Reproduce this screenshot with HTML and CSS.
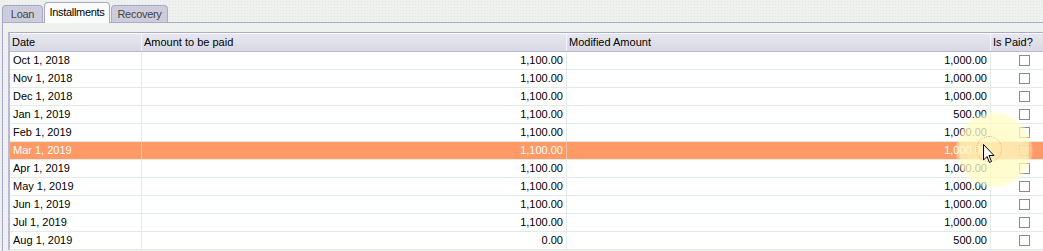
FILE: index.html
```html
<!DOCTYPE html>
<html>
<head>
<meta charset="utf-8">
<link rel="stylesheet" href="styles.css">
</head>
<body>
<div class="window">
  <div class="tabs">
    <div class="tab t-loan">Loan</div>
    <div class="tab active t-inst">Installments</div>
    <div class="tab t-rec">Recovery</div>
  </div>
  <div class="panel">
    <div class="grid">
      <div class="row head">
        <div class="c c1">Date</div>
        <div class="c c2">Amount to be paid</div>
        <div class="c c3">Modified Amount</div>
        <div class="c c4">Is Paid?</div>
      </div>
      <div class="row"><div class="c c1">Oct 1, 2018</div><div class="c c2 num">1,100.00</div><div class="c c3 num">1,000.00</div><div class="c c4"><span class="cb"></span></div></div>
      <div class="row"><div class="c c1">Nov 1, 2018</div><div class="c c2 num">1,100.00</div><div class="c c3 num">1,000.00</div><div class="c c4"><span class="cb"></span></div></div>
      <div class="row"><div class="c c1">Dec 1, 2018</div><div class="c c2 num">1,100.00</div><div class="c c3 num">1,000.00</div><div class="c c4"><span class="cb"></span></div></div>
      <div class="row"><div class="c c1">Jan 1, 2019</div><div class="c c2 num">1,100.00</div><div class="c c3 num">500.00</div><div class="c c4"><span class="cb"></span></div></div>
      <div class="row"><div class="c c1">Feb 1, 2019</div><div class="c c2 num">1,100.00</div><div class="c c3 num">1,000.00</div><div class="c c4"><span class="cb"></span></div></div>
      <div class="row sel"><div class="c c1">Mar 1, 2019</div><div class="c c2 num">1,100.00</div><div class="c c3 num">1,000.00</div><div class="c c4"><span class="cb"></span></div></div>
      <div class="row"><div class="c c1">Apr 1, 2019</div><div class="c c2 num">1,100.00</div><div class="c c3 num">1,000.00</div><div class="c c4"><span class="cb"></span></div></div>
      <div class="row"><div class="c c1">May 1, 2019</div><div class="c c2 num">1,100.00</div><div class="c c3 num">1,000.00</div><div class="c c4"><span class="cb"></span></div></div>
      <div class="row"><div class="c c1">Jun 1, 2019</div><div class="c c2 num">1,100.00</div><div class="c c3 num">1,000.00</div><div class="c c4"><span class="cb"></span></div></div>
      <div class="row"><div class="c c1">Jul 1, 2019</div><div class="c c2 num">1,100.00</div><div class="c c3 num">1,000.00</div><div class="c c4"><span class="cb"></span></div></div>
      <div class="row"><div class="c c1">Aug 1, 2019</div><div class="c c2 num">0.00</div><div class="c c3 num">500.00</div><div class="c c4"><span class="cb"></span></div></div>
    </div>
  </div>
  <div class="glow"></div>
  <div class="ring"></div>
  <svg class="cursor" width="12" height="20" viewBox="0 0 12 20">
    <path d="M0.5 0.5 L0.5 16 L4 12.5 L6.5 18.5 L8.5 17.5 L6 11.5 L11 11.5 Z" fill="#fff" stroke="#000" stroke-width="1"/>
  </svg>
</div>
</body>
</html>
```
FILE: styles.css
```css
html, body {
  margin: 0;
  padding: 0;
}
body {
  background: #eef1ee;
  font-family: Tahoma, "Liberation Sans", Arial, sans-serif;
  font-size: 11px;
  color: #000;
  overflow: hidden;
  width: 1043px;
  height: 251px;
}
.window {
  position: relative;
  width: 1043px;
  height: 251px;
  overflow: hidden;
  background-color: #eef1ee;
  background-image: radial-gradient(rgba(200,205,215,0.35) 0.6px, transparent 0.8px);
  background-size: 3px 3px;
}
.tabs {
  display: flex;
  align-items: flex-end;
  height: 22px;
  padding-left: 2px;
  position: relative;
  z-index: 2;
}
.tab {
  box-sizing: border-box;
  height: 17px;
  line-height: 16px;
  text-align: center;
  border: 1px solid #a9a9c9;
  border-bottom: none;
  border-radius: 4px 4px 0 0;
  background-color: #d9d9e3;
  background-image: radial-gradient(rgba(170,170,200,0.6) 0.6px, transparent 0.8px);
  background-size: 2px 2px;
  color: #444;
  margin-right: 1px;
  letter-spacing: -0.3px;
  white-space: nowrap;
}
.t-loan { width: 41px; }
.t-inst { width: 66px; }
.t-rec { width: 57px; }
.tab.active {
  height: 21px;
  line-height: 19px;
  margin-bottom: -1px;
  background: #fbfbfb;
  color: #000;
}
.panel {
  border-top: 1px solid #a9a9d1;
  border-left: 1px solid #a9a9d1;
  margin-left: 2px;
  padding: 9px 0 0 5px;
  height: 230px;
  background-color: #eef1ee;
}
.grid {
  border-top: 1px solid #a9a9d1;
  border-left: 2px solid #b7b7d7;
  background: #fff;
  width: 1100px;
}
.row {
  display: flex;
  height: 17px;
  line-height: 17px;
  border-bottom: 1px solid #e2ebe8;
}
.row.head {
  height: 17px;
  line-height: 17px;
  margin-top: 1px;
  background: linear-gradient(#e6e6ee, #d9d9e5);
  border-bottom: 1px solid #b9b9d5;
}
.c {
  box-sizing: border-box;
  padding: 0 3px;
  white-space: nowrap;
  border-right: 1px solid #e2ebe8;
}
.head .c {
  border-right: 1px solid #f4f4f8;
  padding: 0 2px;
}
.c1 { width: 132px; }
.c2 { width: 425px; }
.c3 { width: 424px; }
.c4 { width: 119px; border-right: none; }
.num { text-align: right; }
.cb {
  display: block;
  width: 11px;
  height: 11px;
  box-sizing: border-box;
  border: 1px solid #8a8a8a;
  margin: 3px 0 0 25px;
}
.row.sel {
  background: #ff9966;
  color: #fff;
}
.row.sel .c {
  border-right-color: #ffc4a6;
}
.glow {
  position: absolute;
  left: 955px;
  top: 111px;
  width: 78px;
  height: 78px;
  border-radius: 50%;
  background: radial-gradient(circle, rgba(255,252,190,0.8) 0%, rgba(255,252,195,0.75) 62%, rgba(255,252,200,0) 72%);
  pointer-events: none;
}
.ring {
  position: absolute;
  left: 976px;
  top: 136px;
  width: 24px;
  height: 24px;
  border-radius: 50%;
  border: 1px dotted rgba(255,110,80,0.55);
  pointer-events: none;
}
.cursor {
  position: absolute;
  left: 983px;
  top: 144px;
}
```
